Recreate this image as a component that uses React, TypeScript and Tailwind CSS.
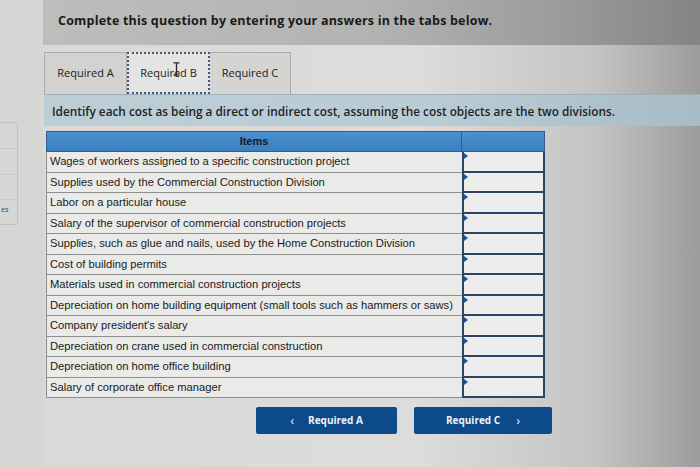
import React from "react";

const items = [
  "Wages of workers assigned to a specific construction project",
  "Supplies used by the Commercial Construction Division",
  "Labor on a particular house",
  "Salary of the supervisor of commercial construction projects",
  "Supplies, such as glue and nails, used by the Home Construction Division",
  "Cost of building permits",
  "Materials used in commercial construction projects",
  "Depreciation on home building equipment (small tools such as hammers or saws)",
  "Company president's salary",
  "Depreciation on crane used in commercial construction",
  "Depreciation on home office building",
  "Salary of corporate office manager",
];

export default function App() {
  return (
    <div
      className="w-[700px] h-[467px] overflow-hidden flex bg-[linear-gradient(90deg,#d9d9d7_0%,#dcdcda_60%,#c4c4c2_85%,#9c9c9c_100%)]"
      style={{ fontFamily: "'Open Sans', sans-serif" }}
    >
      {/* left strip */}
      <div className="w-[43px] shrink-0 flex flex-col bg-[#d6d6d4]">
        <div className="mt-[122px] w-[18px] h-[103px] border border-l-0 border-[#c2c2c0] rounded-r-[3px] flex flex-col">
          <div className="h-[26px] border-b border-[#c8c8c6]" />
          <div className="h-[26px] border-b border-[#c8c8c6]" />
          <div className="h-[25px] border-b border-[#c8c8c6]" />
          <div className="text-[7px] text-[#4a6a9a] pt-[6px] pl-[1px] font-semibold leading-none">es</div>
        </div>
      </div>

      {/* main */}
      <div className="flex-1 flex flex-col">
        <div className="h-[45px] shrink-0 bg-[linear-gradient(90deg,#bdbdbb_0%,#b3b3b1_50%,#9a9a99_80%,#848484_100%)] pl-[15px] pt-[7px]">
          <span className="text-[12.5px] font-bold text-[#1a1a1a] tracking-[0.2px]">
            Complete this question by entering your answers in the tabs below.
          </span>
        </div>

        {/* tabs */}
        <div className="mt-[7px] pl-[1px] flex h-[42px]">
          <div className="w-[83px] border border-[#a9a9a7] border-b-0 bg-[#d2d2d0] flex items-center justify-center text-[11px] text-[#222]">
            Required A
          </div>
          <div className="w-[83px] border-[2px] border-dotted border-[#44597a] bg-[#e4e4e2] flex items-center justify-center text-[11px] text-[#222] relative">
            Required B
            <svg className="absolute left-[44px] top-[8px]" width="7" height="14" viewBox="0 0 7 14">
              <path d="M0.5 0.8 H6.5 M3.5 0.8 V13.2 M0.5 13.2 H6.5" stroke="#2a2a2a" strokeWidth="1.3" fill="none" />
            </svg>
          </div>
          <div className="w-[81px] border border-[#a9a9a7] border-l-0 border-b-0 bg-[#d4d4d2] flex items-center justify-center text-[11px] text-[#222]">
            Required C
          </div>
        </div>

        {/* instruction bar */}
        <div className="h-[32px] shrink-0 ml-[1px] bg-[linear-gradient(90deg,#bccdd5_0%,#b9ccd5_60%,#a8bcc6_100%)] border-t border-[#9fb0b8] pl-[8px] pt-[2px] flex items-center">
          <span className="text-[11.8px] font-semibold text-[#1f2326]">
            Identify each cost as being a direct or indirect cost, assuming the cost objects are the two divisions.
          </span>
        </div>

        {/* table */}
        <div className="mt-[5px] ml-[3px] w-[499px] flex flex-col" style={{ fontFamily: "'Liberation Sans', Arial, sans-serif" }}>
          <div className="flex h-[21px] bg-[linear-gradient(180deg,#4b90d0_0%,#3b7fc0_100%)] border border-[#2f5f8f]">
            <div className="w-[415px] border-r border-[#2f5f8f] flex items-center justify-center text-[11px] font-bold text-[#1a1a1a]">
              Items
            </div>
            <div className="flex-1" />
          </div>
          {items.map((t) => (
            <div key={t} className="flex h-[20.5px]">
              <div className="w-[416px] bg-[#eaeae8] border-l border-b border-[#8e8e8e] pl-[3px] flex items-center text-[11.2px] text-[#1a1a1a] whitespace-nowrap overflow-hidden">
                {t}
              </div>
              <div className="flex-1 bg-[#ececea] border-x-[2px] border-b-[2px] border-[#2c4566] relative">
                <span className="absolute left-0 top-[1px] w-0 h-0 border-y-[3px] border-y-transparent border-l-[4px] border-l-[#1e4f9a]" />
              </div>
            </div>
          ))}
        </div>

        {/* buttons */}
        <div className="mt-[9px] ml-[213px] flex gap-[17px]">
          <button className="w-[141px] h-[27px] bg-[#0d4a8a] rounded-[2px] flex items-center justify-center gap-[14px] text-[#eef2f8] text-[10px] font-bold">
            <span className="text-[13px] font-normal leading-none">&lsaquo;</span>
            <span>Required A</span>
          </button>
          <button className="w-[138px] h-[27px] bg-[#0d4a8a] rounded-[2px] flex items-center justify-center gap-[16px] text-[#eef2f8] text-[10px] font-bold">
            <span>Required C</span>
            <span className="text-[13px] font-normal leading-none">&rsaquo;</span>
          </button>
        </div>
      </div>
    </div>
  );
}
